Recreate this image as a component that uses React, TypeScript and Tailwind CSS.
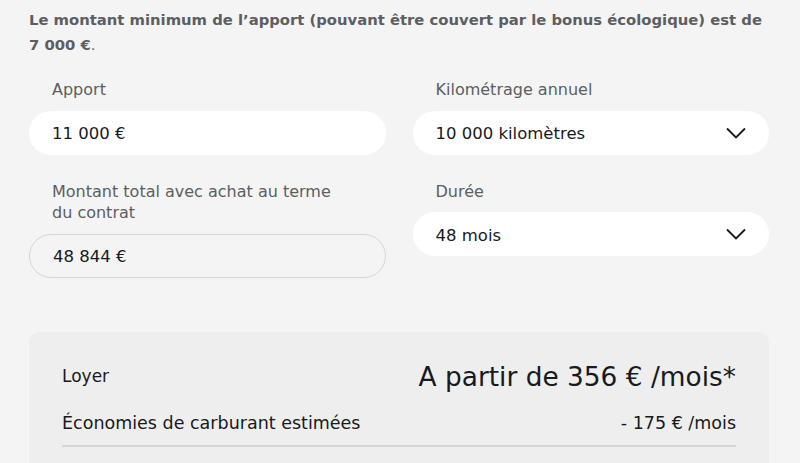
import React from "react";

const body = { fontFamily: "'DejaVu Sans', Inter, sans-serif" };

const Chevron: React.FC = () => (
  <svg width="20" height="12" viewBox="0 0 20 12" fill="none" className="shrink-0">
    <path d="M1 1.5 L10 10.5 L19 1.5" stroke="#171a20" strokeWidth="1.9" />
  </svg>
);

interface FieldProps {
  label: React.ReactNode;
  value: string;
  select?: boolean;
  readOnly?: boolean;
}

const Field: React.FC<FieldProps> = ({ label, value, select, readOnly }) => {
  return (
    <div className="flex flex-col gap-[10px]">
      <label className="px-[23px] text-[16px] leading-[21.5px] text-[#5c5e62]">{label}</label>
      <div
        className={`h-[44px] rounded-full flex items-center justify-between pl-[23px] pr-[23px] text-[16.5px] text-[#171a20] ${
          readOnly ? "border border-[#d6d6d6] bg-transparent" : "bg-white"
        }`}
      >
        <span className="pt-[4px]">{value}</span>
        {select && <Chevron />}
      </div>
    </div>
  );
};

export default function App() {
  return (
    <div className="h-[463px] bg-[#f4f4f4] overflow-hidden" style={body}>
      <div className="pl-[29px] pr-[31px] pt-[7px]">
        <p className="text-[14.8px] leading-[25px] font-bold text-[#5c5e62]">
          Le montant minimum de l’apport (pouvant être couvert par le bonus écologique) est de{" "}
          {"7\u00a0000\u00a0€"}
          <span className="font-normal">.</span>
        </p>

        <div className="mt-[22px] grid grid-cols-2 gap-x-[27px] gap-y-[26px] items-start">
          <Field label="Apport" value="11 000 €" />
          <Field label="Kilométrage annuel" value="10 000 kilomètres" select />
          <Field
            label={
              <>
                Montant total avec achat au terme
                <br />
                du contrat
              </>
            }
            value="48 844 €"
            readOnly
          />
          <Field label="Durée" value="48 mois" select />
        </div>

        {/* Summary card */}
        <div className="mt-[54px] bg-[#eeeeee] rounded-[10px] px-[33px] pt-[29px] pb-[20px] text-[#171a20]">
          <div className="flex items-center justify-between h-[32px]">
            <span className="text-[17px] font-medium">Loyer</span>
            <span className="text-[26.4px] leading-[32px]">A partir de 356 € /mois*</span>
          </div>
          <div className="flex items-center justify-between mt-[19px] h-[24px]">
            <span className="text-[17.5px]">Économies de carburant estimées</span>
            <span className="text-[17.5px]">- 175 € /mois</span>
          </div>
          <div className="mt-[9px] h-[2px] bg-[#d5d5d5]" />
          <div className="h-[40px]" />
        </div>
      </div>
    </div>
  );
}
